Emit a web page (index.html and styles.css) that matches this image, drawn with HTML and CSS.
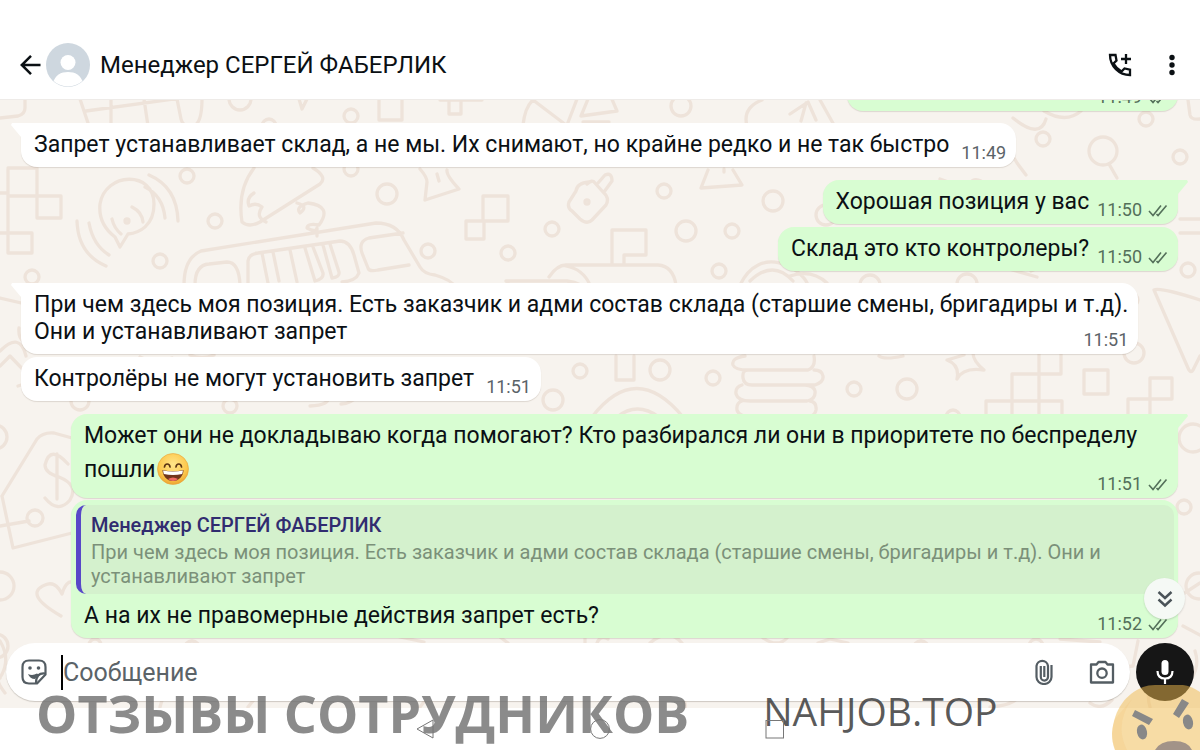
FILE: index.html
```html
<!DOCTYPE html>
<html lang="ru">
<head>
<meta charset="utf-8">
<meta name="viewport" content="width=device-width, initial-scale=1">
<title>Менеджер СЕРГЕЙ ФАБЕРЛИК</title>
<link rel="stylesheet" href="styles.css">
</head>
<body>
<svg class="defs" aria-hidden="true">
  <symbol id="ticks" viewBox="0 0 20 13"><path d="M1 7l4 4.500L13 1.500M8.500 10l1.500 1.500L18.500 1.500" fill="none" stroke="currentColor" stroke-width="1.600"/></symbol>
</svg>
<header class="topbar">
  <button class="icon-btn" aria-label="Назад"><svg width="22" height="22" viewBox="0 0 22 22"><path d="M20.500 11H2M11 1.800L1.800 11l9.200 9.200" fill="none" stroke="currentColor" stroke-width="2.500"/></svg></button>
  <svg class="avatar" viewBox="0 0 44 44" aria-hidden="true"><clipPath id="av"><circle cx="22" cy="22" r="21.500"/></clipPath><circle cx="22" cy="22" r="22" fill="#ced7df"/><g clip-path="url(#av)" fill="#fff"><circle cx="22" cy="19.500" r="7.500"/><path d="M7 40c2-8 8-11 15-11s13 3 15 11l-6 4H13z"/></g></svg>
  <h1 class="title">Менеджер СЕРГЕЙ ФАБЕРЛИК</h1>
  <button class="icon-btn call" aria-label="Добавить звонок"><svg width="24" height="24" viewBox="0 0 24 24" fill="none" stroke="currentColor" stroke-width="2.300"><path d="M2 2h5.500l1 5.500-3 3c2 3.500 4.500 6 8 8l3-3 5.500 1.200V22C11 22 2 13 2 2z"/><path d="M18 1v10M13 6h10"/></svg></button>
  <button class="icon-btn" aria-label="Меню"><svg width="6" height="22" viewBox="0 0 6 22" fill="currentColor"><circle cx="3" cy="3.500" r="2.700"/><circle cx="3" cy="11" r="2.700"/><circle cx="3" cy="18.500" r="2.700"/></svg></button>
</header>
<main class="chat">
  <svg class="wallpaper" viewBox="0 99 1200 609" preserveAspectRatio="xMinYMin slice" fill="none" stroke="#eee3da" stroke-width="3.300" stroke-linejoin="round" stroke-linecap="round" aria-hidden="true">
    <path d="M0 117l18-2q7-2 7-8V96M80 98l11 33M86 110l117-16M111 98v27M144 98l4 27M177 98l4 20q2 9 12 7 9-2 9-27M229 98a11 11 0 0 0 22 0M299 98l3 10 5-10M379 98v21h23V98M449 100v13h12v-13M440 99h42M523 124q2-18 10-25l33 25M577 98l-10 26M588 98l-7 17 36-5-6-14M583 121h26M747 125q-5-18 15-26M790 113l18-12 8 18M806 102l-5 18M820 99l14 25M1188 99l2 15q1 5 10 4"/>
    <path d="M8 168v84h24v-20H8M0 192h8M8 167h29v48M0 232h8M8 195h53v22H37v-22M120 246l-5-10q-17-13-15-33c5-32 54-34 54 0 0 22-15 29-26 30zM112 218q2 9 9 15M132 206q10 5 11 15M77 220q1 33 29 45M89 222q4 22 20 32M145 186q18 9 20 31M149 174q28 12 29 46M242 221q-5-32 12-54M260 221l60-38q8-7-7-16M242 221q7 6 18 0M254 192q-8 5-5 13 7-4 13 1-7 10 4 15M297 202q12 3 3 10-5-6 8-10 25 3 11 22-12-2-12 3 9 5 10 0v8"/>
    <path d="M184 284q0-27 17-34l175-28q21 0 28 17l16 27q4 7 15 8 17 5 20 12M195 284q0-20 14-21l18-2q12 0 13 23M248 284v-24q1-7 10-8l82-12q10 0 14 14l5 18q-3 8-17 9M262 252l6 30M273 251l6 29M290 249l7 32M305 247l10 33q9-2 8-8l-10-26M323 244l9 33q8-1 7-6l-9-28M362 252q-4-12 7-15l34-5M362 252l6 15q1 4 10 2l31-5"/>
    <path d="M420 168q7 8 7 13l-2 18 34-11q-13-14-12-19M437 173l2 7M483 195h25v25h-25zM466 220h18v18h-18zM589 181q-12 1-13 9l-7 11q-2 6 3 9l8 8q7 6 12 1l14-15q4-7-3-13l-8-9q-3-4-8 1M598 182l7-8q7-3 7 6l-8 11"/><circle cx="587" cy="201" r="2"/>
    <path d="M612 263v-34h34v25h-22v10M549 276q8-12 17-12h92q15 1 18 20M506 280h61q16 2 22 12M506 280l4 5M566 265q17 3 24 19M708 169l-7 18 41-3-9-15M724 168v3M740 284c20-42 62-17 68 0M750 280q23-22 43 0M790 275q22-7 37 7M930 185l87 15M927 184l-1 18M940 178l28 10q3-13 13-8l20 15M1013 155l4 7 9 12M1013 117q27 22 33 1M984 261l53 15M1031 270l21-9M1180 218h20M1180 232h20"/>
    <circle cx="1103" cy="150" r="14"/><path d="M1109 163l8 14M1044 110q22 13 37 0"/>
    <path d="M0 297l30 7M0 365l10-10 24 25-16 5M0 350q20-20 26 5M19 327q-1 10 5 14M190 354q12 5 24 0M140 356q15 8 32 1M616 355v24h18v-24M592 416q44-57 91 0M617 416q20-16 42 0"/>
    <path d="M745 355q-14 2-12 9 2 5 15 5h60q8-3 6-14M748 369q-6 0-5 8 1 7 9 7h63q9-3 8-9-1-6-9-6M742 384q-7 2-6 9 2 7 14 7h57q9-2 8-10-1-5-10-6M742 400q-6 2-5 9 2 7 15 7M810 400q7 1 6 9-1 6-8 7M957 378q3-14-10-19l17-5M957 378q6-12 27-9-11-9-11-17M879 355q5 4 24 0M1012 373h49v-33h-22v80M1012 416v-43M986 416v-16h76v16M1084 369h24v24h-24zM1150 377h22v21h-44v18M1150 377v38M1154 289l34 78q3 7 6 0l6-12M1154 289q6-3 46 10"/>
    <path d="M2 495l35-57q6-7 17-6l18 5M2 495l11 52 59-15M0 525l29-5M68 463q-18-20-23 1 0 8 14 12 20 8 11 23-12 14-25-2M57 453v45M61 615q-38-22-16-31 10-5 17 9 4-14 11-12"/><circle cx="35" cy="517" r="8"/>
    <path d="M310 405q20-1 18-9M341 403q10 0 18-9M1180 595l20-13M1183 625l17 9M1138 640l-5 25-20 2M1195 650q5 15-4 28M400 636l24 5M500 636l8 6M585 642v-7M597 642q3-8 11-4M650 642q18-16 32 0M763 637q15 10 24 0M818 642l12-4 18 4M1060 638l40 3M0 640q12 20-1 38M5 692q-10-13-5-15M160 706l3-10M248 706l8-10M420 706l7-9M681 697q6 5 4 10M990 706q20-1 28-9M1090 702q11 8 22-3M1150 706q-7-23 16-35"/>
    <g>
      <circle cx="127" cy="220" r="2"/><circle cx="187" cy="175" r="7"/><circle cx="215" cy="220" r="7"/><circle cx="160" cy="260" r="7"/><circle cx="32" cy="276" r="7"/><circle cx="351" cy="115" r="7"/><circle cx="269" cy="125" r="7"/><circle cx="351" cy="168" r="7"/><circle cx="387" cy="193" r="10"/><circle cx="428" cy="250" r="7"/><circle cx="508" cy="252" r="7"/><circle cx="552" cy="228" r="7"/><circle cx="664" cy="190" r="7"/><circle cx="681" cy="105" r="10"/><circle cx="773" cy="200" r="10"/><circle cx="686" cy="230" r="10"/><circle cx="732" cy="230" r="7"/><circle cx="719" cy="270" r="7"/><circle cx="580" cy="370" r="7"/><circle cx="660" cy="369" r="10"/><circle cx="713" cy="377" r="7"/><circle cx="553" cy="399" r="10"/><circle cx="854" cy="388" r="7"/><circle cx="907" cy="388" r="10"/><circle cx="953" cy="416" r="7"/><circle cx="1043" cy="138" r="7"/><circle cx="1146" cy="118" r="7"/><circle cx="1180" cy="156" r="7"/><circle cx="826" cy="214" r="10"/><circle cx="1188" cy="269" r="7"/><circle cx="1131" cy="299" r="7"/><circle cx="1134" cy="352" r="10"/><circle cx="1193" cy="437" r="14"/><circle cx="870" cy="284" r="10"/><circle cx="967" cy="283" r="10"/><circle cx="230" cy="405" r="7"/><circle cx="80" cy="400" r="9"/><circle cx="-5" cy="436" r="12"/><circle cx="0" cy="585" r="14"/><circle cx="-4" cy="645" r="12"/><circle cx="95" cy="644" r="6"/><circle cx="1184" cy="506" r="7"/><circle cx="1199" cy="585" r="13"/><circle cx="192" cy="648" r="8"/><circle cx="921" cy="648" r="8"/><circle cx="1036" cy="645" r="7"/>
    </g>
  </svg>
  <section class="messages" aria-label="Сообщения">
    <article class="msg out clipped"><span class="meta">11:49 <svg class="ticks"><use href="#ticks"/></svg></span></article>
    <article class="msg in first"><p>Запрет устанавливает склад, а не мы. Их снимают, но крайне редко и не так быстро</p><span class="meta">11:49</span></article>
    <article class="msg out first"><p>Хорошая позиция у вас</p><span class="meta">11:50 <svg class="ticks"><use href="#ticks"/></svg></span></article>
    <article class="msg out"><p>Склад это кто контролеры?</p><span class="meta">11:50 <svg class="ticks"><use href="#ticks"/></svg></span></article>
    <article class="msg in first multi"><p>При чем здесь моя позиция. Есть заказчик и адми состав склада (старшие смены, бригадиры и т.д).<br>Они и устанавливают запрет</p><span class="meta">11:51</span></article>
    <article class="msg in"><p>Контролёры не могут установить запрет</p><span class="meta">11:51</span></article>
    <article class="msg out first multi wide"><p>Может они не докладываю когда помогают? Кто разбирался ли они в приоритете по беспределу <span class="emoji-line">пошли<svg class="emoji" viewBox="0 0 32 32" role="img" aria-label="Смеющийся смайлик"><defs><radialGradient id="face" cx="50%" cy="35%" r="65%"><stop offset="0" stop-color="#ffe58a"/><stop offset=".7" stop-color="#fcc84c"/><stop offset="1" stop-color="#eda532"/></radialGradient></defs><circle cx="16" cy="16" r="15.500" fill="url(#face)" stroke="#e8a23a" stroke-width=".6"/><path d="M7.500 14c.5-4 5-4 5.500 0M19 14c.5-4 5-4 5.500 0" fill="none" stroke="#5b3413" stroke-width="1.700" stroke-linecap="round"/><path d="M5.500 17q10.500 2.500 21 0c0 6-4.500 11-10.500 11S5.500 23 5.500 17z" fill="#70351c"/><path d="M6 17.500q10 2.200 20 0l-.8 3.500q-9.200 2-18.400 0z" fill="#fff"/><path d="M11 26q5-3 10 0-2 2-5 2t-5-2z" fill="#ef6a62"/></svg></span></p><span class="meta">11:51 <svg class="ticks"><use href="#ticks"/></svg></span></article>
    <article class="msg out multi wide quoted">
      <blockquote class="quote"><strong>Менеджер СЕРГЕЙ ФАБЕРЛИК</strong><span>При чем здесь моя позиция. Есть заказчик и адми состав склада (старшие смены, бригадиры и т.д). Они и устанавливают запрет</span></blockquote>
      <p>А на их не правомерные действия запрет есть?</p><span class="meta">11:52 <svg class="ticks"><use href="#ticks"/></svg></span>
    </article>
    <button class="scroll-down" aria-label="Вниз"><svg width="18" height="20" viewBox="0 0 18 20" fill="none" stroke="currentColor" stroke-width="2.400"><path d="M2.500 3L9 9l6.500-6M2.500 10.500L9 16.500l6.500-6"/></svg></button>
  </section>
  <form class="composer">
    <div class="field">
      <button type="button" class="icon-btn" aria-label="Стикеры"><svg width="26" height="26" viewBox="0 0 26 26" fill="none" stroke="currentColor" stroke-width="2.200"><path d="M8 1.500h10q6.500 0 6.500 6.500v7.500L16 24.500H8q-6.500 0-6.500-6.500V8Q1.500 1.500 8 1.500z" stroke-linejoin="round"/><path d="M24 14.500q-9-1-9 9.500"/><path d="M7 15q4.500 2 9-.5l1.500 1L14 20q-5 0-7-5z" fill="currentColor" stroke="none"/><g fill="currentColor" stroke="none"><circle cx="9" cy="9" r="1.800"/><circle cx="17.500" cy="9" r="1.800"/></g></svg></button>
      <span class="caret"></span>
      <input class="entry" type="text" placeholder="Сообщение" aria-label="Сообщение">
      <button type="button" class="icon-btn attach" aria-label="Прикрепить"><svg width="18" height="26" viewBox="0 0 18 26" fill="none" stroke="currentColor" stroke-width="2.200"><path d="M16.500 6v12a7.500 7 0 0 1-15 0V7a5.800 5.800 0 0 1 11.500 0v11a3.500 3.500 0 0 1-7.200 0V7"/><path d="M9.300 7v11"/></svg></button>
      <button type="button" class="icon-btn" aria-label="Камера"><svg width="26" height="24" viewBox="0 0 26 24" fill="none" stroke="currentColor" stroke-width="2.300" stroke-linejoin="round"><path d="M2 4.500h5.500L9.500 2h7l2 2.500H24v18H2z"/><circle cx="13" cy="13.200" r="4.700"/></svg></button>
    </div>
    <button type="button" class="mic" aria-label="Голосовое сообщение"><svg width="18" height="26" viewBox="0 0 18 26"><rect x="5.500" y="1" width="7" height="15" rx="3.500" fill="#fff"/><path d="M1.500 12q0 7.500 7.500 7.500t7.500-7.500M9 19.500V25" fill="none" stroke="#fff" stroke-width="2.200"/></svg></button>
  </form>
</main>
<nav class="navbar" aria-label="Навигация">
  <button class="icon-btn" aria-label="Назад"><svg width="20" height="20" viewBox="0 0 20 20"><path d="M18 1v18L2 10z"/></svg></button>
  <button class="icon-btn" aria-label="Домой"><svg width="20" height="20" viewBox="0 0 20 20"><circle cx="10" cy="10" r="9.400"/></svg></button>
  <button class="icon-btn" aria-label="Недавние"><svg width="20" height="20" viewBox="0 0 20 20"><rect x="1" y="1.500" width="17.500" height="17.500"/></svg></button>
</nav>
<div class="stamp">
  <span class="stamp-main">ОТЗЫВЫ СОТРУДНИКОВ</span>
  <span class="stamp-site">NAHJOB.TOP</span>
</div>
<svg class="angry" viewBox="0 0 88 65" aria-hidden="true"><path d="M0 48C2 24 14 9 31 2q5-2 12-2h28q8 1 17 7v58H3Q0 58 0 48z" fill="#f0b94b" opacity=".5"/><path d="M15 65Q2 40 20 14L3 34q-6 16 0 31z" fill="#efb860" opacity=".15"/><g fill="#888"><path d="M23 25l18 9-4 6-17-9zM70 14l7 4-10 15-6-4z"/><ellipse cx="30" cy="47" rx="5" ry="7.500" transform="rotate(-12 30 47)"/><ellipse cx="76" cy="37" rx="5" ry="7.500" transform="rotate(-12 76 37)"/></g><path d="M43 65q5-9 19-9t18 9z" fill="#a29388"/></svg>
</body>
</html>
```
FILE: styles.css
```css
* { box-sizing: border-box; }
body {
  margin: 0;
  height: 100vh;
  display: flex;
  flex-direction: column;
  position: relative;
  overflow: hidden;
  background: #fff;
  color: #0b1014;
  font-family: Roboto, "Noto Sans", sans-serif;
}
button, input { font: inherit; color: inherit; border: 0; padding: 0; background: none; }
p, h1, blockquote { margin: 0; }
svg { flex: none; display: block; }
.defs { position: absolute; width: 0; height: 0; }
.icon-btn { display: flex; }

.topbar {
  display: flex;
  align-items: center;
  padding: 43px 25px 12px 20px;
  border-bottom: 1px solid #eeebe8;
}
.avatar { width: 44px; height: 44px; margin-left: 4px; }
.title { flex: 1; margin-left: 10px; font-size: 24px; line-height: 32px; font-weight: 400; }
.call { margin-right: 37px; }

.chat { flex: 1; min-height: 0; display: flex; flex-direction: column; position: relative; background: #f7f3ee; overflow: hidden; }
.wallpaper { position: absolute; inset: 0; width: 100%; height: 100%; }
.messages {
  flex: 1;
  min-height: 0;
  overflow: hidden;
  position: relative;
  display: flex;
  flex-direction: column;
  justify-content: flex-end;
  padding: 0 22px 5px 21px;
}
.msg {
  position: relative;
  flex: none;
  display: flex;
  align-items: flex-end;
  margin-top: 3px;
  padding: 8px 10px 9px 13px;
  border-radius: 16px;
  font-size: 23px;
  line-height: 27px;
  box-shadow: 0 1px 1px rgba(120, 105, 90, .2);
}
.in { align-self: flex-start; background: #fff; }
.out { align-self: flex-end; background: #d8fdd2; }
.in.first { margin-top: 12px; border-top-left-radius: 0; }
.out.first { margin-top: 13px; border-top-right-radius: 0; }
.first::before {
  content: "";
  position: absolute;
  top: 0;
  width: 10px;
  height: 14px;
  background: inherit;
}
.in.first::before { right: 100%; clip-path: polygon(10% 0, 100% 0, 100% 100%, 0 15%); }
.out.first::before { left: 100%; clip-path: polygon(0 0, 90% 0, 100% 15%, 0 100%); }
.meta {
  display: flex;
  align-items: center;
  gap: 6px;
  margin: 0 0 -6px 8px;
  font-size: 18px;
  line-height: 22px;
  color: #5b6368;
}
.in .meta { margin-left: 12px; }
.out .meta { color: #54705a; }
.ticks { width: 20px; height: 13px; }
.clipped { width: 331px; height: 44px; justify-content: flex-end; }
.multi { display: grid; }
.multi > p, .multi > .meta { grid-area: 2 / 1; }
.multi > .meta { align-self: end; justify-self: end; }
.wide { align-self: stretch; margin-left: 50px; }
.emoji-line { display: flex; align-items: center; height: 40px; }
.emoji { width: 32px; height: 32px; margin-left: 1px; }
.quoted { margin-top: 2px; padding-top: 5px; }
.quote {
  grid-area: 1 / 1;
  margin: 0 -6px 8px -8px;
  padding: 7px 60px 6px 10px;
  border-left: 5px solid #5848c8;
  border-radius: 10px;
  background: #d4f1cd;
  font-size: 20px;
  line-height: 24px;
  color: #7b9079;
}
.quote strong { display: block; margin-bottom: 2px; line-height: 26px; font-weight: 500; color: #312c70; }
.quote span { display: block; }
.scroll-down {
  position: absolute;
  right: 15px;
  bottom: 24px;
  width: 41px;
  height: 41px;
  display: grid;
  place-items: center;
  border-radius: 50%;
  background: #f5f9f5;
  color: #4a5358;
  box-shadow: 0 1px 2px rgba(0, 0, 0, .15);
}

.composer { position: relative; display: flex; gap: 6px; padding: 0 6px 7px; }
.field {
  flex: 1;
  min-width: 0;
  display: flex;
  align-items: center;
  padding: 0 15px;
  border-radius: 29px;
  background: #fff;
  color: #545d63;
  box-shadow: 0 1px 1px rgba(80, 70, 60, .25);
}
.caret { width: 2px; height: 35px; margin-left: 14px; background: #000; }
.entry { flex: 1; min-width: 0; height: 36px; outline: 0; font-size: 25px; }
.entry::placeholder { color: #5b6368; opacity: 1; }
.attach { margin-right: 36px; }
.mic { width: 58px; height: 58px; display: grid; place-items: center; border-radius: 50%; background: #161616; }

.navbar { display: flex; justify-content: center; align-items: center; gap: 155px; height: 42px; }
.navbar svg { position: relative; z-index: 1; fill: none; stroke: #777; stroke-width: 1; }
.stamp {
  position: absolute;
  left: 36px;
  bottom: 9px;
  display: flex;
  align-items: flex-start;
  gap: 74px;
  pointer-events: none;
  white-space: nowrap;
  font-family: "Open Sans", sans-serif;
  line-height: 56px;
}
.stamp-main { font-size: 52px; font-weight: 700; color: rgba(110, 110, 110, .8); }
.stamp-site { font-size: 39px; line-height: 52px; font-weight: 500; color: rgba(60, 60, 60, .85); }
.angry { position: absolute; right: 0; bottom: 0; width: 88px; height: 65px; pointer-events: none; }
```
